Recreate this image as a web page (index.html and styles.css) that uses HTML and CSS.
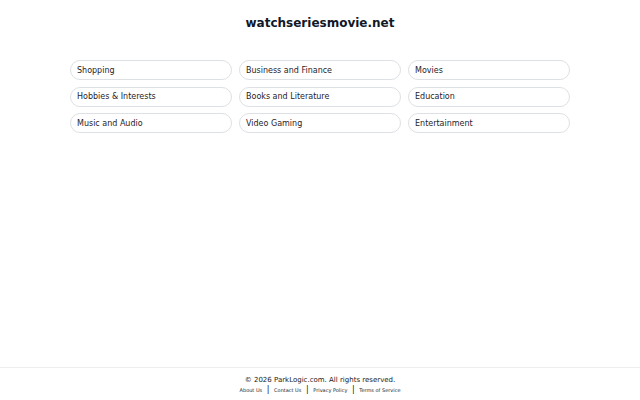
FILE: index.html
```html
<!DOCTYPE html>
<html lang="en">
<head>
  <meta charset="UTF-8">
  <meta name="viewport" content="width=device-width, initial-scale=1">
  <title>watchseriesmovie.net</title>
  <link rel="stylesheet" href="styles.css">
</head>
<body>
  <main class="content">
    <h1>watchseriesmovie.net</h1>

    <div class="links">
      <a href="#" class="link">Shopping</a>
      <a href="#" class="link">Business and Finance</a>
      <a href="#" class="link">Movies</a>
      <a href="#" class="link">Hobbies &amp; Interests</a>
      <a href="#" class="link">Books and Literature</a>
      <a href="#" class="link">Education</a>
      <a href="#" class="link">Music and Audio</a>
      <a href="#" class="link">Video Gaming</a>
      <a href="#" class="link">Entertainment</a>
    </div>
  </main>

  <footer class="footer">
    <p class="copy">&copy; 2026 ParkLogic.com. All rights reserved.</p>
    <div class="footer-links">
      <a href="#">About Us</a>
      <span class="sep">|</span>
      <a href="#">Contact Us</a>
      <span class="sep">|</span>
      <a href="#">Privacy Policy</a>
      <span class="sep">|</span>
      <a href="#">Terms of Service</a>
    </div>
  </footer>
</body>
</html>
```

FILE: styles.css
```css
body {
  font-family: 'DejaVu Sans', sans-serif;
  margin: 0;
  background: #ffffff;
  color: #1f2328;
  min-height: 100vh;
  display: flex;
  flex-direction: column;
}
.content {
  flex: 1;
}
h1 {
  font-size: 12px;
  line-height: 16px;
  text-align: center;
  margin: 15px 0 0;
  color: #111827;
}
.links {
  display: grid;
  grid-template-columns: repeat(3, 162px);
  column-gap: 7px;
  row-gap: 6.5px;
  justify-content: center;
  margin-top: 29px;
}
.link {
  display: flex;
  align-items: center;
  height: 20px;
  box-sizing: border-box;
  padding: 0 6px;
  border: 1px solid #dde0e4;
  border-radius: 10px;
  font-size: 8px;
  color: #1f2328;
  text-decoration: none;
}
.footer {
  border-top: 1px solid #eeeeee;
  padding: 7px 0 6px;
  text-align: center;
}
.copy {
  margin: 0;
  font-size: 7px;
  line-height: 11px;
  color: #222;
}
.footer-links {
  line-height: 8px;
  font-size: 5px;
}
.footer-links a {
  color: #222;
  text-decoration: none;
}
.sep {
  font-size: 8px;
  color: #111;
  margin: 0 3px;
}
```
